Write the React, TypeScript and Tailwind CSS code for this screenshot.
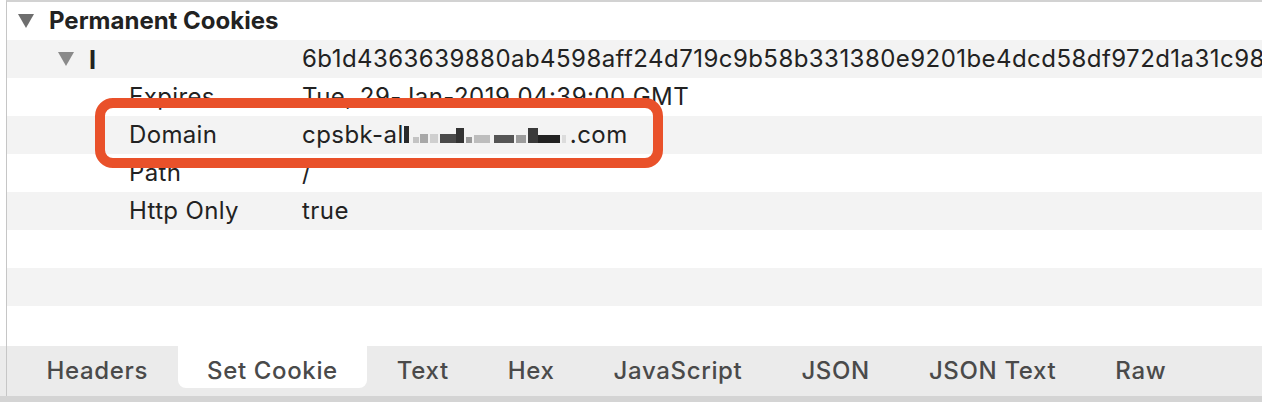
import React from "react";

const font = { fontFamily: 'Inter, "Noto Sans", "Liberation Sans", sans-serif' };

function Tri({ color }: { color: string }) {
  return (
    <svg width="16" height="14" viewBox="0 0 16 14" className="shrink-0">
      <polygon points="0,0 16,0 8,14" fill={color} />
    </svg>
  );
}

function Row({
  gray,
  label,
  children,
}: {
  gray?: boolean;
  label?: string;
  children?: React.ReactNode;
}) {
  return (
    <div className={`h-[38px] flex items-center ${gray ? "bg-[#f3f3f3]" : "bg-white"}`}>
      <div className="w-[295px] pl-[122px] shrink-0 text-[#222]">{label}</div>
      <div className="text-[#222] whitespace-nowrap flex items-center tracking-[0.45px]">{children}</div>
    </div>
  );
}

function Mosaic() {
  const blocks: [number, number, number, string][] = [
    [0, 5, 17, "#2a2a2a"],
    [9, 6, 6, "#c4c4c4"],
    [16, 8, 9, "#a8a8a8"],
    [26, 8, 9, "#cfcfcf"],
    [36, 16, 9, "#4a4a4a"],
    [52, 8, 15, "#333"],
    [62, 6, 6, "#9a9a9a"],
    [70, 16, 8, "#bdbdbd"],
    [90, 20, 8, "#555"],
    [112, 10, 8, "#9c9c9c"],
    [124, 10, 15, "#3a3a3a"],
    [134, 22, 8, "#222"],
    [158, 4, 8, "#dcdcdc"],
  ];
  return (
    <span className="relative inline-block w-[166px] h-[26px]">
      {blocks.map(([x, w, h, c], i) => (
        <span
          key={i}
          className="absolute bottom-[5px]"
          style={{ left: x, width: w, height: h, background: c }}
        />
      ))}
    </span>
  );
}

const tabs = ["Headers", "Set Cookie", "Text", "Hex", "JavaScript", "JSON", "JSON Text", "Raw"];

export default function App() {
  return (
    <div
      className="w-[1262px] h-[402px] overflow-hidden bg-[#ebebeb] text-[24px] tracking-[0.35px] relative"
      style={font}
    >
      <div className="flex h-[346px]">
        <div className="w-[6px] bg-white shrink-0" />
        <div className="flex-1 border-l border-[#c6c6c6] border-t-2 border-t-[#d2d2d2] bg-white overflow-hidden">
          <div className="h-[38px] flex items-center pl-[11px] gap-[15px]">
            <Tri color="#6e6e6e" />
            <span className="font-bold text-[#222] tracking-[0px]">Permanent Cookies</span>
          </div>
          <div className="h-[38px] flex items-center bg-[#f3f3f3]">
            <div className="w-[295px] pl-[51px] shrink-0 flex items-center gap-[15px]">
              <Tri color="#8a8a8a" />
              <span className="font-bold text-[#222] text-[26px]">l</span>
            </div>
            <div className="text-[#222] whitespace-nowrap tracking-[0.45px]">
              6b1d4363639880ab4598aff24d719c9b58b331380e9201be4dcd58df972d1a31c98
            </div>
          </div>
          <Row label="Expires">Tue, 29-Jan-2019 04:39:00 GMT</Row>
          <Row gray label="Domain">
            <span>cpsbk-al</span>
            <Mosaic />
            <span>.com</span>
          </Row>
          <Row label="Path">/</Row>
          <Row gray label="Http Only">true</Row>
          <Row />
          <Row gray />
          <Row />
        </div>
      </div>
      <div className="flex h-[50px]">
        <div className="w-[6px] shrink-0" />
        <div className="flex-1 border-l border-[#c6c6c6] flex pl-[10px]">
          {tabs.map((t) => (
            <div
              key={t}
              className={`h-[42px] px-[29.5px] pt-[8px] flex items-center font-medium text-[#4a4a4a] tracking-[0.65px] ${
                t === "Set Cookie" ? "bg-white rounded-b-[8px]" : ""
              }`}
            >
              {t}
            </div>
          ))}
        </div>
      </div>
      <div className="h-[6px] bg-[#d4d4d4]" />
      <div className="absolute left-[95px] top-[98px] w-[568px] h-[70px] border-[10px] border-[#e9512a] rounded-[18px]" />
    </div>
  );
}
